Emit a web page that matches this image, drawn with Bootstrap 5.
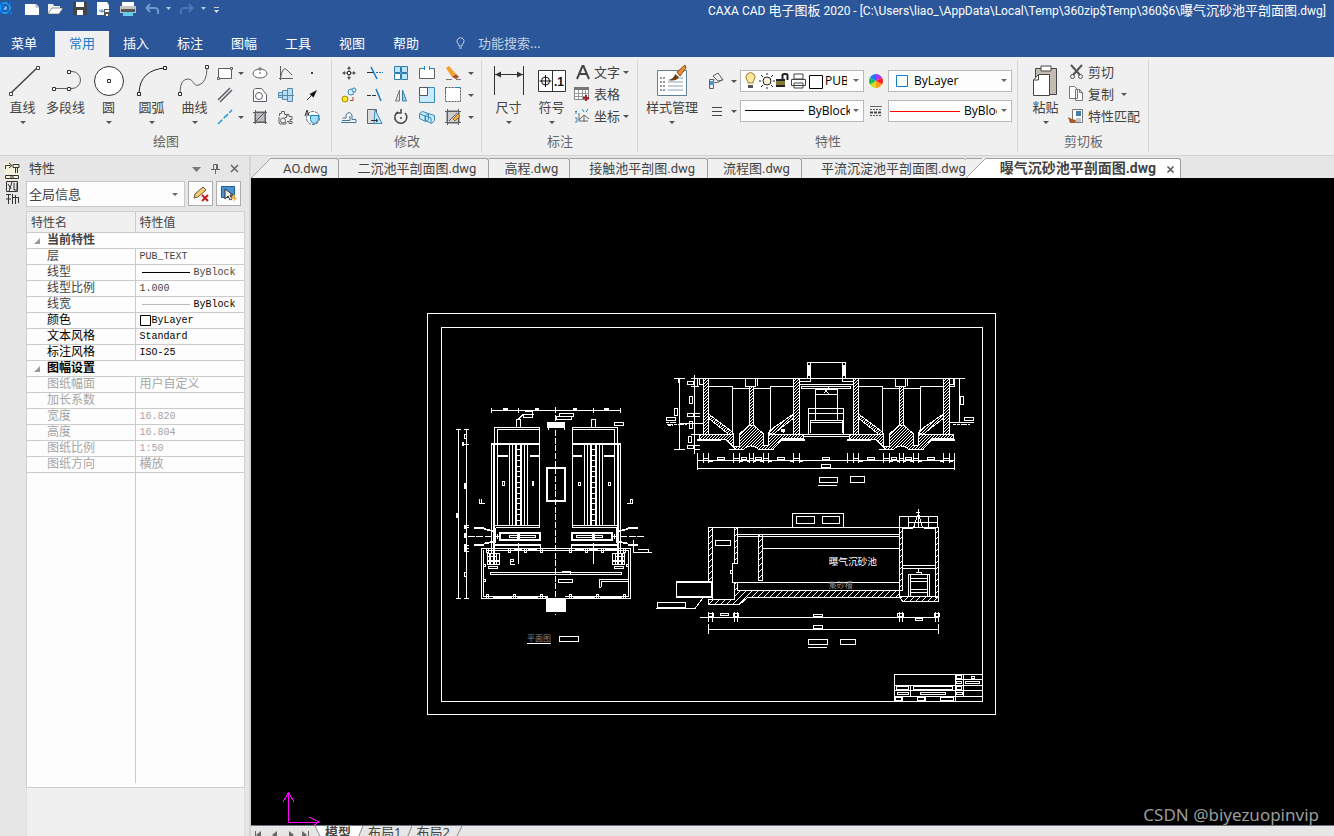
<!DOCTYPE html>
<html lang="zh-CN">
<head>
<meta charset="utf-8">
<meta name="viewport" content="width=device-width, initial-scale=1">
<title>CAXA CAD 电子图板 2020</title>
<link href="https://cdn.jsdelivr.net/npm/bootstrap@5.3.0/dist/css/bootstrap.min.css" rel="stylesheet">
<style>
:root{--ui:"Noto Sans","Noto Sans CJK SC",sans-serif}
body{font-family:var(--ui);font-size:13px;line-height:18px;color:#444;background:#e6e6e6}
button,select,input{font:inherit;color:inherit}
button{border:0;background:none;padding:0}
svg{display:block;flex:none}
.brandbar{background:#2b579a;color:#fff}
.titlerow{height:31px}
.titlerow .doc-title{line-height:22px;font-family:Roboto,"Noto Sans CJK SC",sans-serif;font-size:12px}
.titlerow .doc-title span{font-size:13px}
.qat button{height:18px}
.menurow{height:26px}
.menurow .nav-link{width:54px;padding:0 0 2px;line-height:24px;text-align:center;color:#fff;border-radius:0}
.menurow .file-link{width:48px;margin-right:7px}
.menurow .nav-link.active{background:#f0f0f0;color:#1979ca}
.menurow label{height:24px}
.finder{background:none;border:0;padding:0;width:90px;color:#c8d8ee;outline:0}
.finder::placeholder{color:#c3d0e4;opacity:1}
.ribbon{background:#f0f0f0;border-bottom:1px solid #d2d2d2}
.rgroup{padding-top:5px;position:relative}
.rgroup::after{content:"";position:absolute;right:0;top:3px;bottom:3px;width:1px;background:#d5d5d5}
.rtools{height:66px}
.rlabel{line-height:27px;text-align:center;color:#666}
.big{width:43px;height:66px;display:flex;flex-direction:column;align-items:center;white-space:nowrap}
.big svg:first-child{height:36px}
.caret{width:12px;height:12px;display:block;flex:none;position:relative}
.caret::after{content:"";position:absolute;left:3px;top:5px;border:3px solid transparent;border-top-color:#555;border-bottom:0}
.g{display:grid;grid-template-rows:repeat(3,22px);align-items:center;justify-items:center}
.g-draw{grid-template-columns:18px 13px 26px 26px 26px}
.g-mod{grid-template-columns:repeat(5,26px) 10px}
.lrow{height:22px;padding-bottom:2px;display:flex;align-items:center;white-space:nowrap}
.s{fill:none;stroke:#5c6066;stroke-width:1}
.combo{position:relative;width:124px;height:22px}
.combo select{appearance:none;width:100%;height:22px;border:1px solid #b8b8b8;background:#fdfdfd;color:#000;font-family:"Open Sans",sans-serif;font-size:12px;padding:0 15px 0 4px;border-radius:0;outline:0}
.combo svg{position:absolute;left:2px;top:1px;pointer-events:none}
.combo .redline{position:absolute;left:2px;top:11px;width:70px;height:1px;background:#f00;pointer-events:none}
.combo::after{content:"";position:absolute;right:5px;top:9px;border:3px solid transparent;border-top-color:#666;border-bottom:0;pointer-events:none}
.rail{width:26px}
.props{width:219px}
.props-head{height:25px}
.toolrow .combo{width:159px;height:26px}
.toolrow .combo select{height:26px;font-size:13px;font-family:var(--ui);color:#444;padding-left:2px;border-color:#c8c8c8}
.toolrow .combo::after{top:12px;right:7px}
.toolrow{gap:3px}
.sqbtn{width:25px;height:25px;border:1px solid #adadad;background:#fcfcfc;display:grid;place-items:center}
.sheet{background:#fdfdfd;border:1px solid #cfcfcf}
.ptable{width:100%;table-layout:fixed;font-size:12px;line-height:13px;font-family:"Liberation Mono","Noto Sans CJK SC",monospace}
.ptable td,.ptable th{padding:2px 0 0;height:16px;border-bottom:1px solid #cbcbcb;white-space:nowrap;overflow:hidden;font-weight:400}
.ptable thead th{height:20px;background:#f0f0f0;padding:5px 0 0 4px;line-height:14px}
.ptable tbody th{padding-left:20px}
.ptable td,.ptable thead th+th{border-left:1px solid #cbcbcb;padding-left:4px}
.ptable tbody .sec{font-weight:700;padding-left:7px}
.ptable .lat{font-size:10px;padding-top:0}
.ptable .strong{color:#000}
.ptable .off{color:#a6a6a6}
.sec i{display:inline-block;border:3px solid transparent;border-right-color:#999;border-bottom-color:#999;margin-right:7px}
.tabs{height:22px;background:#e6e6e6}
.dtab{height:20px;line-height:19px;font-family:Roboto,"Noto Sans CJK SC",sans-serif;background:#f0f0f0;border-top:1px solid #a0a0a0;border-right:1px solid #a0a0a0;border-radius:0 3px 0 0;padding:0 12px 0 19px;color:#444;text-decoration:none;white-space:nowrap}
.dtab.tight{padding:0 11px 0 15px}
.dtab.first{padding:0 10px 0 12px}
.dtab.on{background:#fff;font-weight:700;font-size:14px;padding:0 1px 0 14px}
.stage{background:#000;min-height:0}
.stage>svg{width:100%;height:100%;position:absolute}
.cad{fill:none;stroke:#fff}
.cad .w{fill:#fff;stroke:none}
.cad .h{fill:url(#hatch)}
.cad .k{fill:#000}
.wm{position:absolute;right:15px;bottom:0;font-size:17px;line-height:20px;color:#9c9c9c}
.layouts{height:11px;overflow:hidden;background:#e6e6e6}
.layouts a{color:#444;text-decoration:none;line-height:13px}
</style>
</head>
<body class="vh-100 overflow-hidden d-flex flex-column">
<header class="brandbar">
  <div class="titlerow d-flex justify-content-between">
    <div class="qat d-flex">
      <button aria-label="应用程序"><svg width="20" height="18"><circle cx="5" cy="8" r="5" fill="none" stroke="#1c9bf0" stroke-width="2"/><circle cx="5" cy="8" r="2" fill="#6fc6ff"/><path d="M0 3l4 4-4 6M7 10l5 4M8 4l3-1" stroke="#0a6fe0" stroke-width="2" fill="none"/></svg></button>
      <button aria-label="新建"><svg width="24" height="18"><path d="M5 4h11l3 3v8H5z" fill="#fff"/><path d="M16 4v3h3" fill="none" stroke="#999"/></svg></button>
      <button aria-label="打开"><svg width="24" height="18"><path d="M4 14V4h5l1 2h6v2" fill="#eee"/><path d="M4 14l4-6h11l-4 6z" fill="#fff" stroke="#555" stroke-width=".6"/></svg></button>
      <button aria-label="保存"><svg width="24" height="18"><path d="M5 2h13l1 1v12H5z" fill="#444"/><path d="M8 2h8v5H8zM9 10h6v5H9z" fill="#fff"/></svg></button>
      <button aria-label="另存为"><svg width="24" height="18"><path d="M5 2h10l2 3v10H5z" fill="#fff"/><path d="M7 10l3 2 2-1M10 9v3" stroke="#2b79c9" fill="none"/><path d="M12 9h6v7h-6z" fill="#555"/><path d="M13 10h4v2h-4zM14 14h2v2h-2z" fill="#fff"/></svg></button>
      <button aria-label="打印"><svg width="24" height="18"><path d="M6 2h12v4H6z" fill="#fff"/><path d="M4 6h16v7H4z" fill="#c9c4bf"/><path d="M5 9h14v3H5z" fill="#555"/><path d="M7 12h10v4H7z" fill="#66ccf2"/></svg></button>
      <button aria-label="撤销"><svg width="34" height="18"><path d="M7 8h8q4 0 3 6M10 4L6.500 8l3.500 4" fill="none" stroke="#6f9bd3" stroke-width="2"/><path d="M26 7h5l-2.500 3z" fill="#b8c8e0"/></svg></button>
      <button aria-label="重做"><svg width="34" height="18"><path d="M18 8h-8q-4 0-3 6M15 4l3.500 4-3.500 4" fill="none" stroke="#4a76b5" stroke-width="2"/><path d="M27 7h5l-2.500 3z" fill="#b8c8e0"/></svg></button>
      <button aria-label="自定义"><svg width="14" height="18"><path d="M6 7.500h5" stroke="#ccc"/><path d="M6 10h5l-2.500 3z" fill="#ddd"/></svg></button>
    </div>
    <div class="doc-title pe-2 text-nowrap">CAXA CAD <span>电子图板</span> 2020 - [C:\Users\liao_\AppData\Local\Temp\360zip$Temp\360$6\<span>曝气沉砂池平剖面图</span>.dwg]</div>
  </div>
  <nav class="menurow nav flex-nowrap">
    <a class="nav-link file-link" href="#">菜单</a><a class="nav-link active" href="#">常用</a><a class="nav-link" href="#">插入</a><a class="nav-link" href="#">标注</a><a class="nav-link" href="#">图幅</a><a class="nav-link" href="#">工具</a><a class="nav-link" href="#">视图</a><a class="nav-link" href="#">帮助</a>
    <label class="d-flex align-items-center ps-3"><svg class="ms-1 me-2" width="17" height="16" fill="none" stroke="#c3d0e4"><path d="M6 11q0-2-1.500-3A3.500 3.500 0 1 1 10.500 8Q9 9 9 11zM6 13h3"/></svg><input class="finder" placeholder="功能搜索..." aria-label="功能搜索"></label>
  </nav>
</header>

<section class="ribbon d-flex">
  <div class="rgroup" style="width:332px">
    <div class="rtools d-flex" style="padding-left:1px">
      <button class="big"><svg width="34" height="36" class="s" style="stroke:#444"><path d="M5 31L32 5" stroke-width="1.500"/><path d="M3.500 30.500h3v3h-3zM30.500 4.500h3v3h-3z" fill="#fff"/></svg>直线<span class="caret"></span></button>
      <button class="big"><svg width="34" height="36" class="s"><path d="M4 26.500h16M20 9.500h3a8.500 8.500 0 0 1 0 17h-3"/><path d="M3.500 25.500h3v3h-3zM18.500 25.500h3v3h-3zM18.500 8.500h3v3h-3z" fill="#fff" stroke="#333"/></svg>多段线</button>
      <button class="big"><svg width="34" height="36" class="s"><circle cx="17" cy="19" r="14.500" fill="#fff" stroke="#333"/><path d="M15.500 17.500h3v3h-3z" stroke="#333"/></svg>圆<span class="caret"></span></button>
      <button class="big"><svg width="34" height="36" class="s" style="stroke:#222"><path d="M4 31Q5 8 30 6"/><path d="M2.500 30.500h3v3h-3zM28.500 4.500h3v3h-3z" fill="#fff"/></svg>圆弧<span class="caret"></span></button>
      <button class="big"><svg width="34" height="36" class="s"><path d="M2 31Q2 17 10 17C16 17 15 25 21 23Q29 20 29 6"/><path d="M.5 30.500h3v3h-3zM27.500 3.500h3v3h-3z" fill="#fff" stroke="#333"/></svg>曲线<span class="caret"></span></button>
      <div class="g g-draw">
        <button aria-label="矩形"><svg class="s" width="16" height="16"><path d="M1.500 3.500h13v10h-13z" fill="#fff"/><path d="M.5 12.500h2v2h-2zM13.500 2.500h2v2h-2z" fill="#fff"/></svg></button><span class="caret"></span>
        <button aria-label="椭圆"><svg class="s" width="16" height="16"><ellipse cx="8" cy="8.500" rx="7" ry="4.500" fill="#fff"/><path d="M7 3h2v2H7zM7 8h2" fill="#fff"/></svg></button>
        <button aria-label="公式曲线"><svg class="s" width="16" height="16"><path d="M2.500 1v14M1 13.500h14M2.500 13Q5 0 9 5l5 5"/></svg></button>
        <button aria-label="点"><svg width="16" height="16"><path d="M7 7h2v2H7z" fill="#444"/></svg></button>
        <button aria-label="平行线"><svg class="s" width="16" height="16"><path d="M1 13L13 1M3 15L15 3" stroke-width="1.500"/></svg></button><span></span>
        <button aria-label="多边形"><svg class="s" width="16" height="16"><path d="M1.500 3l2-1.500h6l5 6v7h-13z" fill="#fff"/><circle cx="7" cy="9" r="3.500"/></svg></button>
        <button aria-label="轴"><svg width="16" height="16" stroke="#5588aa" fill="#b8dcf4"><path d="M.5 5.500h4v5h-4zM4.500 3.500h5v9h-5zM9.500 1.500h5v13h-5zM0 8.500h16"/></svg></button>
        <button aria-label="箭头"><svg width="16" height="16"><path d="M3 13l5-5" stroke="#333"/><path d="M13 3L5.500 7l4 3.500z" fill="#111"/></svg></button>
        <button aria-label="构造线"><svg width="16" height="16"><path d="M1 15L15 1" stroke="#1d9ad6" stroke-width="1.500" stroke-dasharray="6 2"/></svg></button><span class="caret"></span>
        <button aria-label="剖面线"><svg class="s" width="16" height="16"><path d="M3 3h10v10H3z" fill="#bbb"/><path d="M1 3.500h14M1 13.500h14M3.500 1v14M13.500 1v14M4 12l9-9"/></svg></button>
        <button aria-label="零件"><svg class="s" width="16" height="16"><path d="M1.500 7V4.500h2V2.500h3v3h2v3h-2M9 7.500V5.500h2v2h3v3h-2v2h2v2h-3v-2H9"/><circle cx="5" cy="11.500" r="2.500"/><path d="M1 8v6l1 1h6v-2"/></svg></button>
        <button aria-label="局部放大"><svg class="s" width="16" height="16"><circle cx="9" cy="9" r="6.500" fill="#fff" stroke-dasharray="3 1"/><path d="M6.500 6.500h8v3q-1 5-5 5-3-1-3-4z" fill="#a8dbf7" stroke="#1d83bf"/><path d="M1 7L3 1l2 6M2 5h2" stroke="#333"/></svg></button>
      </div>
    </div><div class="rlabel">绘图</div>
  </div>
  <div class="rgroup" style="width:150px">
    <div class="rtools ps-1">
      <div class="g g-mod">
        <button aria-label="移动"><svg width="16" height="16"><path d="M8 1l2 3H6zM8 15l2-3H6zM1 8l3-2v4zM15 8l-3-2v4z" fill="#555"/><path d="M8 3v3M8 10v3M3 8h3M10 8h3" stroke="#555"/><path d="M6.500 6.500h3v3h-3z" fill="#fff" stroke="#333"/></svg></button>
        <button aria-label="裁剪"><svg width="16" height="16"><path d="M0 7.500h7" stroke="#333"/><path d="M4 2l6 12" stroke="#1679c8" stroke-width="1.500"/><path d="M9 7.500h7" stroke="#1679c8" stroke-dasharray="2 1"/></svg></button>
        <button aria-label="阵列"><svg width="16" height="16" fill="#bfe5fa" stroke="#2b7dad"><path d="M1.500 1.500h6v6h-6zM8.500 1.500h6v6h-6zM8.500 8.500h6v6h-6z"/><path d="M1.500 8.500h6v6h-6z" fill="#fff"/></svg></button>
        <button aria-label="打断"><svg class="s" width="16" height="16"><path d="M3 3.500H.5v10h15v-10H13" fill="#fff"/><path d="M2 3.500h3.500M14 3.500h-3.500M5.500 1v4M10.500 1v4" stroke="#178bd0"/></svg></button>
        <button aria-label="删除"><svg width="16" height="16"><path d="M1 3l3-2 7 8-4 3z" fill="#f3a12c"/><path d="M11 9l3 3-3 2-4-2z" fill="#a94f30"/><path d="M1 14.500h6M11 14.500h5" stroke="#777"/></svg></button><span class="caret"></span>
        <button aria-label="平移复制"><svg width="16" height="16"><circle cx="10" cy="5" r="3" fill="#d8effb" stroke="#3387b8"/><circle cx="13" cy="3" r="2" fill="#d8effb" stroke="#3387b8"/><circle cx="4" cy="12" r="3" fill="#ffe629" stroke="#a28d00"/><path d="M9 13.500h3V10" fill="none" stroke="#a33"/></svg></button>
        <button aria-label="延伸"><svg width="16" height="16"><path d="M0 8.500h10" stroke="#333" stroke-dasharray="4 1"/><path d="M9 2l5 12" stroke="#1679c8" stroke-width="1.500"/></svg></button>
        <button aria-label="镜像"><svg width="16" height="16"><path d="M6.500 3v11h-4z" fill="#ddd" stroke="#777"/><path d="M9.500 3v11h4z" fill="#9bd3f3" stroke="#3a7ca5"/></svg></button>
        <button aria-label="比例缩放"><svg width="16" height="16"><path d="M.5.500h15v15H.5z" fill="#c7eafc" stroke="#3a8ab8"/><path d="M.5.500h8v8h-8z" fill="#fff" stroke="#555"/></svg></button>
        <button aria-label="分解"><svg width="16" height="16"><path d="M.5.500h15v14H.5z" fill="#fff" stroke="#555" stroke-dasharray="2 1"/><path d="M.5 1V6M10 .5h5.500" stroke="#178bd0"/></svg></button><span class="caret"></span>
        <button aria-label="等距线"><svg class="s" width="16" height="16"><path d="M0 13.500h15v-3H11V6Q8 1 5 6v3H1.500M1 11.500h8V7" stroke="#46769a"/></svg></button>
        <button aria-label="拉伸"><svg width="16" height="16"><path d="M.5.500h9v14h-9z" fill="#ddd" stroke="#666"/><path d="M8 .5l7 14H7z" fill="#bfe5fa" stroke="#3a8ab8"/><path d="M4 11.500h6M9 10l2 1.500L9 13" fill="none" stroke="#333"/></svg></button>
        <button aria-label="旋转"><svg width="16" height="16" fill="none" stroke="#444"><path d="M5 3a6 6 0 1 0 7 1" stroke-width="1.500"/><path d="M8 0v4H4M7 9h2" stroke-width="1.500"/></svg></button>
        <button aria-label="块"><svg width="16" height="16" fill="#c7eafc" stroke="#3a8ab8"><path d="M.5 4.500l3-2 6 2v6l-3 2-6-3zM6.500 6.500l3-2 6 2v5l-3 3-6-3zM7 7l5 2v5M1 5l5 2v5"/></svg></button>
        <button aria-label="编辑填充"><svg class="s" width="16" height="16"><path d="M2 2h12v12H2z" fill="#ccc"/><path d="M0 2.500h16M0 13.500h16M2.500 0v16M13.500 0v16M4 12l8-8"/><path d="M8 10l5-5 2 2-5 5z" fill="#f0b144" stroke="#a76a20"/></svg></button><span class="caret"></span>
      </div>
    </div><div class="rlabel">修改</div>
  </div>
  <div class="rgroup" style="width:156px">
    <div class="rtools d-flex" style="padding-left:5px">
      <button class="big"><svg width="32" height="36" class="s"><path d="M1.500 4v29M30.500 4v29M2 12.500h28" stroke="#333"/><path d="M2 12.500l6-3v6zM30 12.500l-6-3v6z" fill="#333" stroke="none"/></svg>尺寸<span class="caret"></span></button>
      <button class="big"><svg width="30" height="36"><path d="M1.500 8.500h27v21h-27zM15.500 8.500v21" fill="#fff" stroke="#333"/><circle cx="8.500" cy="19" r="4" fill="none" stroke="#111"/><path d="M2.500 19h12M8.500 13v12" stroke="#111"/><text x="17" y="24" font-family="Liberation Sans" font-size="12" font-weight="700" fill="#111">.1</text></svg>符号<span class="caret"></span></button>
      <div>
        <button class="lrow"><svg class="me-1" width="17" height="16"><path d="M4 15L9.500 2h1L16 15M7 10h6" fill="none" stroke="#444" stroke-width="2"/></svg>文字<span class="caret"></span></button>
        <button class="lrow"><svg class="me-1" width="17" height="16"><path d="M1.500 1.500h14v12h-14z" fill="#fff" stroke="#888"/><path d="M1 1h15v3H1z" fill="#777"/><path d="M2 7.500h14M2 10.500h10M5.500 4v9M9.500 4v9M12.500 4v5" stroke="#999"/><path d="M10 12h6M13 9v6" stroke="#b31c2c" stroke-width="2"/></svg>表格</button>
        <button class="lrow"><svg class="me-1" width="17" height="16" fill="none"><path d="M6 5v8h9M6 12l5-5 5 4M11 7v7" stroke="#666"/><path d="M2 3l1 1 1-1M3 4v2M2 10h2v4H2M9 1l2 3M15 1l-2 3" stroke="#2387c5"/></svg>坐标<span class="caret"></span></button>
      </div>
    </div><div class="rlabel">标注</div>
  </div>
  <div class="rgroup" style="width:380px">
    <div class="rtools d-flex ps-1">
      <button class="big" style="width:60px"><svg width="32" height="36"><path d="M1.500 8.500h29v25h-29z" fill="#fff" stroke="#607f99"/><path d="M4 16h5M4 20h5M4 24h5M4 28h5" stroke="#333" stroke-dasharray="2 1"/><path d="M12 20h15M12 24h15M12 28h15M20 16h7" stroke="#8ba2b5"/><path d="M21 10l8-7 1 3-6 8z" fill="#e39137" stroke="#8f4b11"/><path d="M12 18q6-1 7-6l4 3q-3 5-11 3z" fill="#704018"/></svg>样式管理<span class="caret"></span></button>
      <div class="d-flex flex-column pt-1">
        <div class="d-flex align-items-center" style="height:30px">
          <button class="d-flex align-items-center ms-1" aria-label="图层"><svg width="18" height="18" class="s"><path d="M7 4l5-3 5 7-5 1zM8 7l-1 4 6-1 4-3M3.500 7.500h4v9h-4z" fill="#eee"/><path d="M4 9h4v4H4z" fill="#5497c4" stroke="none"/></svg><span class="caret ms-1"></span></button>
          <div class="combo"><select aria-label="图层" style="padding-left:84px;padding-right:16px"><option>PUB_TEXT</option></select>
            <svg width="84" height="20"><path d="M6 12q0-2-1-3a4.500 4.500 0 1 1 7 0q-1 1-1 3z" fill="#ffe9a0" stroke="#9a7b25"/><path d="M6 14h5v3H6z" fill="#555"/><g stroke="#222"><circle cx="25" cy="10" r="4" fill="#fff4d8"/><path d="M25 2v2M25 16v2M17 10h2M31 10h2M19 4l2 2M29 14l2 2M31 4l-2 2M21 14l-2 2"/></g><path d="M34 8h9v8h-9z" fill="#222"/><path d="M34 11h9M34 13h9" stroke="#e2d24a"/><path d="M40.500 8V4q0-1 2-1h1q2 0 2 1v5" fill="none" stroke="#222" stroke-width="2"/><path d="M52 3h9v5h-9zM49.500 8.500h14v6h-14zM52 12h9v5h-9z" fill="#fff" stroke="#444"/><path d="M67.500 4.500h13v13h-13z" fill="#fff" stroke="#000"/></svg></div>
          <svg class="mx-1" width="16" height="16"><path d="M8 8V1a7 7 0 0 1 6 3.500z" fill="#a13cff"/><path d="M8 8l6-3.500a7 7 0 0 1 0 7z" fill="#f22"/><path d="M8 8l6 3.500A7 7 0 0 1 8 15z" fill="#ff9c12"/><path d="M8 8v7a7 7 0 0 1-6-3.500z" fill="#d4de1b"/><path d="M8 8l-6 3.500a7 7 0 0 1 0-7z" fill="#20ba5c"/><path d="M8 8L2 4.500A7 7 0 0 1 8 1z" fill="#1d78ff"/></svg>
          <div class="combo"><select aria-label="颜色" style="padding-left:25px"><option>ByLayer</option></select><svg width="20" height="20"><path d="M6.500 4.500h11v11h-11z" fill="#fff" stroke="#1679d0"/></svg></div>
        </div>
        <div class="d-flex align-items-center" style="height:30px">
          <button class="d-flex align-items-center ms-1" aria-label="线宽"><svg width="18" height="18"><path d="M6 5.500h10M6 9.500h10M6 13.500h10" stroke="#444"/></svg><span class="caret ms-1"></span></button>
          <div class="combo"><select aria-label="线型" style="padding-left:67px;padding-right:13px"><option>ByBlock</option></select><svg width="64" height="20"><path d="M3 9.500h59" stroke="#000"/></svg></div>
          <svg class="mx-1" width="16" height="16"><path d="M2 3.500h12" stroke="#666"/><path d="M2 6.500h12M2 12.500h12" stroke="#555" stroke-dasharray="2 1"/><path d="M2 9.500h12" stroke="#444" stroke-width="2" stroke-dasharray="3 1"/></svg>
          <div class="combo"><select aria-label="线宽设置" style="padding-left:75px;padding-right:14px"><option>ByBlock</option></select><span class="redline"></span></div>
        </div>
      </div>
    </div><div class="rlabel">特性</div>
  </div>
  <div class="rgroup" style="width:131px">
    <div class="rtools d-flex" style="padding-left:6px">
      <button class="big"><svg width="28" height="36"><path d="M3.500 6.500h21v26h-21z" fill="#c5bcb1" stroke="#444"/><path d="M9 4h10v5H9z" fill="#fff" stroke="#444"/><path d="M1.500 18l5-5.500h11v21h-16z" fill="#fff" stroke="#444"/><path d="M1.500 18h5v-5.500" fill="none" stroke="#444"/></svg>粘贴<span class="caret"></span></button>
      <div>
        <button class="lrow"><svg class="me-1" width="17" height="16" fill="none" stroke="#555"><path d="M4 1l9 10M15 1L6 11" stroke-width="2"/><circle cx="5.500" cy="12.500" r="2"/><circle cx="13.500" cy="12.500" r="2"/></svg>剪切</button>
        <button class="lrow"><svg class="me-1" width="17" height="16" fill="#fff" stroke="#777"><path d="M2.500.500h5l3 3v9h-8zM8.500 3.500h4l3 3v8h-7zM12.500 3.500v3h3"/></svg>复制<span class="caret ms-1"></span></button>
        <button class="lrow"><svg class="me-1" width="17" height="16"><path d="M5.500 1.500h10v13h-10z" fill="#fff" stroke="#777"/><path d="M9 3h5v5H9z" fill="#3e7fb0"/><path d="M9 11h5M9 13h5" stroke="#888"/><path d="M1 9l4 2 4 1-1 3H3z" fill="#a55c2a"/></svg>特性匹配</button>
      </div>
    </div><div class="rlabel">剪切板</div>
  </div>
</section>

<main class="d-flex flex-fill" style="min-height:0">
  <aside class="rail pt-1"><svg width="26" height="48" fill="none" stroke="#333"><path d="M4 3h16v17H4z" fill="#f4f2dc" stroke="none"/><path d="M5.500 9V5.500h5M9 3l3 2.500L9 8M13 4.500h6v3h-6zM15.500 8v5M17.500 8v5M5.500 15.500h13v3h-13zM10 17h4M6.500 21.500h11v10h-11zM8 24l3 5M12 22l-3 9M14 23v7h3v-7M6 34.500h5M8.500 34v10M6 39h5M12.500 34v10M12 37.500h7M15.500 35v9M18.500 37v6"/></svg></aside>
  <aside class="props d-flex flex-column">
    <div class="props-head d-flex align-items-center"><span class="flex-fill" style="padding:0 0 2px 3px">特性</span>
      <button aria-label="菜单"><svg width="16" height="16"><path d="M7 6h9l-4.500 5z" fill="#777"/></svg></button>
      <button aria-label="固定"><svg width="20" height="16" fill="none" stroke="#666"><path d="M12.500 3.500h4v5h-4zM15.500 3.500v5M10 8.500h9M14.500 9v4"/></svg></button>
      <button aria-label="关闭"><svg width="20" height="16" class="me-1"><path d="M10 4l7 7M17 4l-7 7" stroke="#666" stroke-width="1.500"/></svg></button>
    </div>
    <div class="toolrow d-flex">
      <div class="combo"><select aria-label="选择对象"><option>全局信息</option></select></div>
      <button class="sqbtn" aria-label="清除选择"><svg width="18" height="18"><path d="M2 13l1-4 8-7 3 3-8 7z" fill="#f7ce6e" stroke="#654"/><path d="M10 10l6 6M16 10l-6 6" stroke="#c61c1c" stroke-width="2"/></svg></button>
      <button class="sqbtn" aria-label="快速选择"><svg width="18" height="18"><path d="M1.500 1.500h13v11h-13z" fill="#4593d2" stroke="#235f92"/><path d="M5 4v10l3-3 2 4 2-1-2-4h3z" fill="#eee" stroke="#333"/><path d="M13 10l-2 4h3l-1 3 4-4h-3l2-3z" fill="#ffb52b"/></svg></button>
    </div>
    <div class="sheet mt-1 flex-fill d-flex flex-column">
      <table class="ptable"><colgroup><col style="width:108px"><col></colgroup>
        <thead><tr><th>特性名</th><th>特性值</th></tr></thead>
        <tbody>
          <tr><th class="sec" colspan="2"><i></i>当前特性</th></tr>
          <tr><th>层</th><td class="lat">PUB_TEXT</td></tr>
          <tr><th>线型</th><td class="lat"><div class="d-flex align-items-center"><svg class="me-1" width="50" height="3"><path d="M2 1.500h48" stroke="#000"/></svg>ByBlock</div></td></tr>
          <tr><th>线型比例</th><td class="lat">1.000</td></tr>
          <tr><th>线宽</th><td class="lat strong"><div class="d-flex align-items-center"><svg class="me-1" width="50" height="3"><path d="M2 1.500h48" stroke="#bbb"/></svg>ByBlock</div></td></tr>
          <tr class="strong"><th>颜色</th><td class="lat"><div class="d-flex align-items-center"><svg width="12" height="13"><path d="M.5 1.500h10v10H.5z" fill="#fff" stroke="#000"/></svg>ByLayer</div></td></tr>
          <tr class="strong"><th>文本风格</th><td class="lat">Standard</td></tr>
          <tr class="strong"><th>标注风格</th><td class="lat">ISO-25</td></tr>
          <tr class="strong"><th class="sec" colspan="2"><i></i>图幅设置</th></tr>
          <tr class="off"><th>图纸幅面</th><td>用户自定义</td></tr>
          <tr class="off"><th>加长系数</th><td></td></tr>
          <tr class="off"><th>宽度</th><td class="lat">16.820</td></tr>
          <tr class="off"><th>高度</th><td class="lat">16.804</td></tr>
          <tr class="off"><th>图纸比例</th><td class="lat">1:50</td></tr>
          <tr class="off"><th>图纸方向</th><td>横放</td></tr>
        </tbody>
      </table>
      <div class="flex-fill" style="width:109px;border-right:1px solid #cbcbcb"></div>
      <div style="height:4px"></div>
    </div>
    <div style="height:48px;background:#f0f0f0" class="border-start border-end"></div>
  </aside>
  <section class="d-flex flex-column flex-fill ms-1" style="border-left:2px solid #d4d4d4">
    <nav class="tabs d-flex align-items-end">
      <svg width="20" height="20"><path d="M20 0v20H0z" fill="#f0f0f0"/><path d="M0 20L19.500.5H20" fill="none" stroke="#a0a0a0"/></svg>
      <a class="dtab first" href="#">AO.dwg</a><a class="dtab" href="#">二沉池平剖面图.dwg</a><a class="dtab tight" href="#">高程.dwg</a><a class="dtab" href="#">接触池平剖图.dwg</a><a class="dtab tight" href="#">流程图.dwg</a><a class="dtab border-end-0 pe-0" href="#">平流沉淀池平剖面图.dwg</a>
      <svg width="20" height="20"><path d="M0 0h20v20H0z" fill="#f0f0f0"/><path d="M0 .5h16" stroke="#a0a0a0"/><path d="M20 0v20H0z" fill="#fff"/><path d="M0 20L19.500.5H20" fill="none" stroke="#a0a0a0"/></svg>
      <a class="dtab on d-flex align-items-center" href="#">曝气沉砂池平剖面图.dwg<svg class="ms-2" width="15" height="16"><path d="M3.500 5.500l6 6M9.500 5.500l-6 6" stroke="#555" stroke-width="1.500"/></svg></a>
    </nav>
    <div class="stage flex-fill position-relative overflow-hidden">
      <svg viewBox="251 178 1083 647" preserveAspectRatio="xMinYMin meet" shape-rendering="crispEdges" class="cad" role="img" aria-label="曝气沉砂池平剖面图">
        <defs><pattern id="hatch" width="9" height="9" patternUnits="userSpaceOnUse"><path d="M-2 11L11-2M-2 2L2-2M7 11l4-4" stroke="#fff" stroke-width="3"/></pattern>
        <pattern id="hatchw" width="18" height="18" patternUnits="userSpaceOnUse"><path d="M-2 20L20-2M-2 2L2-2M16 20l4-4" stroke="#fff" stroke-width="3"/></pattern></defs>
        <path d="M427.500 313.500h568v401h-568zM441.500 327.500h541v374h-541z"/>
        <!-- 平面图 -->
        <svg x="450" y="395" width="210" height="255" viewBox="0 0 630 765" stroke-width="3" overflow="visible">
          <path d="M125 46.500H512M124.500 39v15M205.500 39v15M430.500 39v15M511.500 39v15"/>
          <path class="w" d="M159 39h15v9h-15zM255 39h12v9h-12zM369 39h12v9h-12zM462 39h15v9h-15zM291 81h54v18h-54zM288 609h60v42h-60z"/>
          <path d="M316.500 36V660" stroke-dasharray="18 5"/><path d="M294 100v5M342 100v5"/>
          <path d="M199.500 96V73.500h12V96M424.500 96V73.500h12V96M223.500 49.500h24v18h-27v-9h30M205 72l15-15M328.500 55.500h42v9h-42zM319.500 64.500h45v9h-45zM493.500 82.500h27v9h-27z"/>
          <path d="M291 219h54v99h-54z" stroke-width="6"/>
          <g id="half">
            <path d="M133.500 475V97.500h135V397.500h-132M142.500 392V103.500h126M124.500 475V146.500M130.500 475V146.500M133 391.500h135"/>
            <path d="M124 147h145M143 183h31M240 183h28" stroke-width="6"/>
            <path d="M178.500 150v240M187.500 150v240M223.500 150v240M232.500 150v240"/><path d="M198 150v240M213 150v240" stroke-width="6"/>
            <path d="M206 163v228" stroke-width="12" stroke-dasharray="3 13.200"/>
            <path d="M150 414h120v21H150z" stroke-width="6"/><path d="M178.500 420.500h78v8h-78zM148 418v14M142 417v15"/>
            <path class="w" d="M201 418h9v16h-9zM193 458h24v9h-24z"/>
            <path d="M136 450h136" stroke-width="6"/><path d="M136.500 445V400M271.500 450v10M205.500 445v62" />
            <path d="M54 424.500h94" stroke-dasharray="20 5"/><path d="M72 399h30M102 402l28 6M72 450h30M102 446l28-6" stroke-width="5"/>
            <path d="M112 475h37v33h-37zM120 478v28M132 478v28M139 478v28M112 485h30M112 498h38" stroke-width="4"/><path d="M115.500 514.500h27v6h-27z"/>
          </g>
          <use href="#half" transform="translate(636 0) scale(-1 1)"/>
          <path d="M157.500 259.500h6v12h-6zM247.500 259.500h3v12h-3zM385.500 262.500h6v9h-6zM475.500 262.500h6v9h-6zM88.500 312v12h15M94.500 312v12M531 325.500h16v-12h-6v12"/>
          <path d="M94.500 460.500h447v150h-447zM109 466.500h426v42M100.500 466v138h190M345 604.500h190V508M136 460.500h136M364 460.500h136"/>
          <path d="M130 606h57M200 606h65M285 606h9M370 606h65M450 606h65M235 465h25M376 465h25M416 465h25M465 465h35" stroke-width="6"/>
          <path d="M109.500 462v10h6v-10M175.500 462v10h6v-10M223.500 462v10h6v-10M271.500 462v10h6v-10M358.500 462v10h6v-10M406.500 462v10h6v-10M454.500 462v10h6v-10M520.500 462v10h6v-10M109.500 609v-11h6v11M190.500 609v-11h6v11M271.500 609v-11h6v11M358.500 609v-11h6v11M439.500 609v-11h6v11M520.500 609v-11h6v11M100 508.500h6v6h-6M100 553.500h6v6h-6M536 508.500h-6v6h6"/>
          <path d="M121.500 532.500h394v6h-394zM334.500 529.500h27v9M325.500 553.500h42v9h-42zM448.500 577V552.500h88M454.500 577V558.500h82M454 577.500h-6M181.500 507v-14h9v7h-9M181 508.500h14"/>
          <path d="M550.500 435v36.500H606M562.500 462.500h33v8"/>
          <path d="M25.500 103v507M49.500 103v507M18 103.500h15M42 103.500h15M18 610.500h15M42 610.500h15M42.500 117.500h6v13h-6zM42.500 532.500h6v12h-6zM42 147.500h15M42 391.500h15M42 397.500h15M42 450.500h15M42 461.500h15M42 470.500h15"/>
          <path class="w" d="M36 141h7v12h-7zM42 264h7v18h-7zM18 354h7v15h-7zM42 390h6v12h-6zM42 414h6v14h-6zM42 447h6v21h-6z"/>
          <text x="231" y="739" font-size="24" fill="#888" stroke="none" font-family="Noto Sans CJK SC, sans-serif">平面图</text>
          <path d="M231 745.500h72M328.500 724.500h57v15h-57z"/>
        </svg>
        <!-- 横剖面 -->
        <svg x="660" y="350" width="330" height="145" viewBox="0 0 990 435" stroke-width="3" overflow="visible">
          <path d="M93 85.500h822M103.500 75v236M58.500 85v213M42 85.500h33M42 298.500h33M55.500 86v12M898.500 86v132M93 108.500h25M93 253.500h25M103 190.500h16M103 199.500h16M103 286.500h16M103 298.500h16M60 220.500h70M869 217.500h72"/>
          <path d="M82.500 94.500h18v9h-18zM88.500 139.500h9v21h-9zM82.500 190.500h18v9h-18zM88.500 214.500h9v21h-9zM85.500 259.500h9v18h-9zM82.500 286.500h18v9h-18zM43.500 175.500h9v21h-9zM19.500 202.500h27v9h-27zM901.500 139.500h9v24h-9zM913.500 202.500h27v9h-27z"/>
          <path d="M18 216.500h30M20 222.500h60M25 227h15M880 222.500h50M905 217h36" stroke-dasharray="9 2" stroke-width="4"/>
          <g id="tank">
            <path class="h" d="M130.500 85.500h15v168h-15zM400.500 85.500h17v168h-17zM268.500 105.500h12v120h-12z"/>
            <path class="h" d="M146 192l72 54v7h-12l-60-48zM400 192l-69 48-10 13h18l61-48z"/>
            <path class="h" d="M118.500 253.500h101v34h20v-37l28-24h14l28 24v36h17v-36l14 3h90v13h-63l-28 31h-44q-24-20-45 0h-24l-27-28h-81z"/>
            <path class="k" d="M256.500 86v22h30V86zM220.500 250v38h18v-38M310.500 250v36h16v-36"/>
            <path d="M146 109.500h72v141M331.500 236V109.500h69M218 115.500h50M280 115.500h51M292.500 86v22M208 298.500h45M294 298.500h44" />
            <path d="M111 270h72M366 270h68" stroke-width="6"/>
            <path d="M112.500 309v30M130.500 309v30M145.500 309v30M220.500 309v30M238.500 309v30M268.500 309v30M280.500 309v30M310.500 309v30M325.500 309v30M400.500 309v30M418.500 309v30M130 325.500h15M220 325.500h18M268 325.500h12M310 325.500h15M400 325.500h18M172.500 322.500h21v6h-21zM244.500 322.500h15v6h-15zM286.500 322.500h18v6h-18zM352.500 322.500h21v6h-21z"/>
            <path d="M147 334h12M238 334h10M260 334h9M281 334h8M300 334h10M326 334h10M391 334h10M418 334h10" stroke-width="5"/>
          </g>
          <use href="#tank" transform="translate(450 0)"/>
          <path d="M118.500 86v18h12M883.500 86v22h-14M868 103.500h12V86M883.500 309v50M112 330.500h772M112 355.500h772M112.500 86v22M112.500 330v29"/>
          <path class="k" d="M442.500 37.500h114v48h-114z"/><path class="w" d="M442 46h10v32h-10zM547 46h10v32h-10z"/><path d="M451.500 38v56h-33M547.500 38v56h33M418 103.500h162M424.500 109.500h147v6h-147zM466.500 117v94M532.500 117v94M466 118.500h66M466 133.500h66M445.500 253v-77.500h105V253M445 190.500h105M451.500 250v-38.500h96V250M451 217.500h97M430 253.500h138M430 259.500h138M490 113l15 18M505 112l-12 18"/>
          <path d="M487.500 322.500h21v6h-21zM484.500 343.500h27v9h-27zM478.500 382.500h54v15h-54zM571.500 379.500h42v18h-42zM474 406.500h57"/>
          <path class="w" d="M366 235l9 4-3 12-10-8z"/>
        </svg>
        <!-- 纵剖面 -->
        <svg x="645" y="500" width="355" height="220" viewBox="0 0 1065 660" stroke-width="3">
          <g style="fill:url(#hatchw)"><path d="M190.500 82.500h12v162h-12zM268.500 82.500h9v108h-9zM340.500 103.500h12v138h-12zM763.500 82.500h9v190h-9zM871.500 82.500h9v210h-9z"/><path d="M190.500 298v15.500h93l24-21h456v-21h-486v-24h-9v50zM763.500 289.500l9 14h108v-14z"/></g>
          <path d="M190 82.500h690v222M277 103.500h486M277 109.500h486M352 145.500h411M262 247.500h501M202.500 244v54M262.500 247v-57h15M257.500 210.500h5v9h-5zM202.500 82v162M211.500 121.500h45v15h-45zM442.500 82V40.500h153V82M454.500 49.500h54v21h-54zM532.500 49.500h51v21h-51z"/>
          <path d="M94.500 245.500h107v46h-107z" stroke-width="5"/>
          <path d="M37.500 307.500h84v15h-84zM33 325.500h117l25-33"/>
          <path d="M763.500 82V49.500h114V82M790.500 49v33M850.500 49v33M790 67.500h87M820.500 27v57M813 37.500h12M818 45l-12 38M822 45l10 38M772 85.500h32M837 85.500h34M772 196.500h99M772 205.500h99M820.500 205v12M811.500 217.500h18v6M790.500 289v-66.500h63V289M796.500 223v66M847.500 223v66M796 235.500h51M796 244.500h51M796 268.500h51M796 278.500h51"/>
          <path d="M165 351.500h716M190 387.500h690M190.500 373v29M880.500 373v29M190.500 336v30M202.500 336v30M268.500 336v30M277.500 336v30M763.500 336v30M772.500 336v30M871.500 336v30M880.500 336v30M190.500 340.500h14v9h-14zM265.500 340.500h14v9h-14zM757.500 340.500h17v9h-17zM868.500 340.500h15v9h-15zM226.500 340.500h24v6h-24zM505.500 343.500h27v6h-27zM505.500 376.500h27v9h-27zM811.500 355.500h21v6h-21z"/>
          <path d="M489.500 418.500h58v15h-58zM489 442.500h57M586.500 418.500h45v15h-45z"/>
          <path d="M748.500 604v-81.500h264M748 556.500h265M748 571.500h265M748 589.500h265M931.500 523v81M955.500 523v66M796.500 556v33M931 538.500h81M771.500 590v14M841.500 590v14M934.500 526.500h15v9h-15zM979.500 529.500h9v6h-9zM934.500 544.500h15v6h-15zM961.500 544.500h42v6h-42zM754.500 559.500h36v9h-36zM805.500 559.500h117v9h-117zM934.500 559.500h15v9h-15zM757.500 577.500h33v6h-33zM826.500 577.500h75v6h-75zM934.500 577.500h17v6h-17zM751.500 592.500h18v9h-18zM817.500 592.500h21v9h-21zM886.500 592.500h39v9h-39z"/>
          <g stroke="none" font-family="Noto Sans CJK SC, sans-serif"><text x="551" y="195" font-size="29" fill="#fff">曝气沉砂池</text><text x="551" y="265" font-size="24" fill="#888">集砂槽</text></g>
        </svg>
        <path d="M288.500 823v-30M283 802l5.500-9.500 5.500 9.500M288 822.500h31M309 817l10 5-5 3" stroke="#f0f"/>
      </svg>
      <div class="wm">CSDN @biyezuopinvip</div>
    </div>
    <nav class="layouts d-flex border-top border-secondary">
      <svg width="64" height="12" fill="#666"><path d="M4 5h1v8H4zM10 5v8L5 9zM26 5v8l-5-4zM38 5v8l5-4zM51 5v8l5-4zM57 5h1v8h-1z"/></svg>
      <svg width="10" height="12"><path d="M0 0h10v12H6z" fill="#fff"/><path d="M0 0l6 12" stroke="#888"/></svg><a href="#" class="fw-bold bg-white">模型</a><svg width="17" height="12"><path d="M0 0h12L7 12H0z" fill="#fff"/><path d="M12 0L7 12" stroke="#888"/></svg><a href="#">布局1</a>
      <svg class="mx-1" width="7" height="12"><path d="M7 0L2 12" stroke="#888"/></svg><a href="#">布局2</a><svg class="ms-1" width="9" height="12"><path d="M8 0L2 12" stroke="#888"/></svg>
    </nav>
  </section>
</main>
<script src="https://cdn.jsdelivr.net/npm/bootstrap@5.3.0/dist/js/bootstrap.bundle.min.js"></script>
</body>
</html>
